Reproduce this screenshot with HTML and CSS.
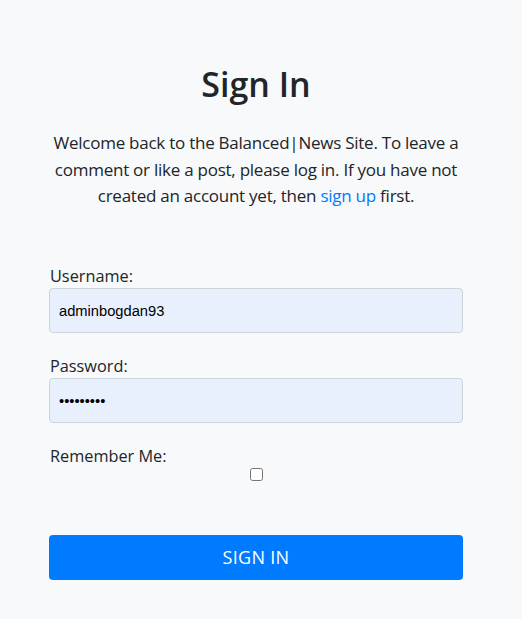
FILE: index.html
```html
<!DOCTYPE html>
<html>
<head>
<meta charset="utf-8">
<link rel="stylesheet" href="styles.css">
</head>
<body>
<main class="page">
  <h1 class="title">Sign In</h1>
  <p class="intro">Welcome back to the Balanced|News Site. To leave a comment or like a post, please log in. If you have not created an account yet, then <a class="link" href="#">sign up</a> first.</p>
  <form class="form">
    <label class="label" for="u">Username:</label>
    <input class="field" id="u" type="text" value="adminbogdan93">
    <label class="label" for="p">Password:</label>
    <input class="field" id="p" type="password" value="password1">
    <label class="label" for="r">Remember Me:</label>
    <div class="check-row"><input class="check" id="r" type="checkbox"></div>
    <button class="btn" type="button">Sign In</button>
  </form>
</main>
</body>
</html>
```
FILE: styles.css
```css
html, body {
  margin: 0;
  padding: 0;
  background: #f8f9fa;
}
body {
  font-family: "Open Sans", "Noto Sans", sans-serif;
  color: #212529;
  height: 619px;
  overflow: hidden;
}
.page {
  width: 414px;
  margin-left: 49px;
  padding-top: 62px;
}
.title {
  margin: 0;
  text-align: center;
  font-size: 34px;
  font-weight: 600;
  line-height: 44px;
}
.intro {
  margin: 24px -5px 0;
  text-align: center;
  font-size: 17px;
  letter-spacing: -0.25px;
  line-height: 26.5px;
}
.link {
  color: #007bff;
  text-decoration: none;
}
.form {
  display: flex;
  flex-direction: column;
  margin-top: 54px;
}
.label {
  padding-left: 1px;
  font-size: 16.3px;
  line-height: 24px;
}
.field {
  box-sizing: border-box;
  height: 45px;
  margin: 0 0 21px;
  padding: 2px 9px 0;
  border: 1px solid #ced4da;
  border-radius: 4px;
  background: #e8f0fe;
  font-family: "Liberation Sans", Arial, sans-serif;
  font-size: 14.7px;
  color: #000;
}
.check-row {
  display: flex;
  justify-content: center;
}
.check {
  width: 13px;
  height: 13px;
  margin: 0;
}
.btn {
  margin-top: 54px;
  height: 45px;
  border: none;
  border-radius: 4px;
  background: #007bff;
  color: #fff;
  text-transform: uppercase;
  font-family: "Open Sans", "Noto Sans", sans-serif;
  font-size: 18px;
  letter-spacing: 0.3px;
}
```
